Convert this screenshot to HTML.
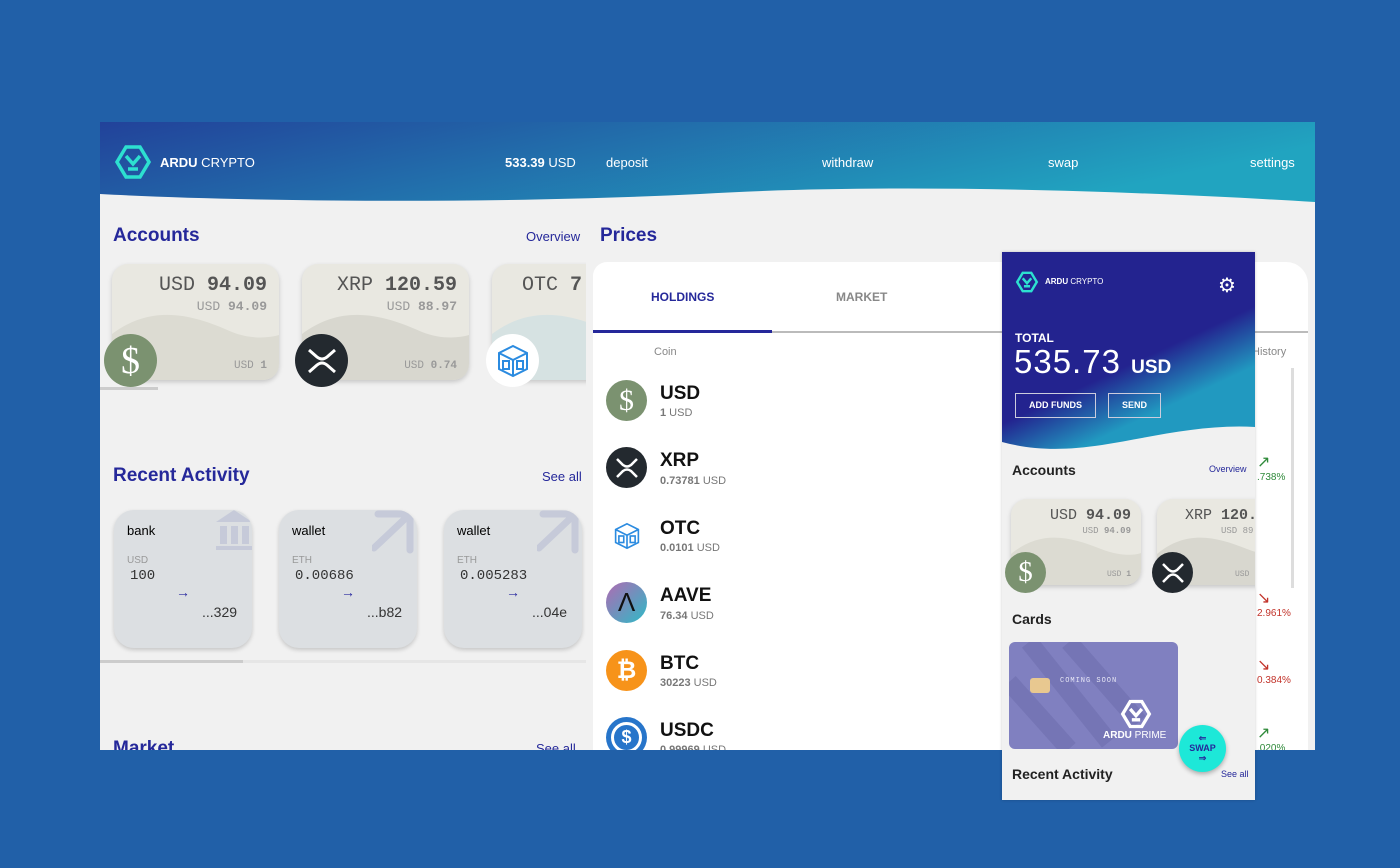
<!DOCTYPE html>
<html><head><meta charset="utf-8"><style>
*{box-sizing:border-box;margin:0;padding:0}
body{width:1400px;height:868px;background:#2160a8;font-family:"Liberation Sans",sans-serif;position:relative;overflow:hidden}
.abs{position:absolute}
.main{left:100px;top:122px;width:1215px;height:628px;background:#f1f1f1;overflow:hidden}
.mono{font-family:"Liberation Mono",monospace}
.card{position:absolute;border-radius:16px;background:#e9e8e1;box-shadow:0 2px 5px rgba(0,0,0,.18);overflow:hidden}
.h2{color:#25289a;font-size:19px;font-weight:bold}
.link{color:#25289a;font-size:13px}
.coin{position:absolute;border-radius:50%;display:flex;align-items:center;justify-content:center;color:#fff}
.act{position:absolute;width:138px;height:138px;border-radius:20px;background:#dcdfe2;box-shadow:0 2px 4px rgba(0,0,0,.18);overflow:hidden}
.row .n{font-size:19px;font-weight:bold;color:#111}
.row .p{font-size:11px;color:#777}
</style></head><body>
<div class="abs main">
 <svg class="abs" style="left:0;top:0" width="1215" height="82"><defs><linearGradient id="g" x1="0" x2="1" y1="0" y2="0.3"><stop offset="0" stop-color="#22429a"/><stop offset="1" stop-color="#21a4c0"/></linearGradient></defs><path d="M0 0H1215V80C1050 70 800 60 600 72 400 82 150 80 0 72Z" fill="url(#g)"/></svg>
 <svg class="abs" style="left:14px;top:22px" width="38" height="36" viewBox="0 0 38 36" fill="none" stroke="#2de0d0" stroke-width="3.5"><path d="M12 3H26L35 18 26 33H12L3 18Z"/><path d="M12 12L19 20 26 12M14 25H24"/></svg>
 <div class="abs" style="left:60px;top:33px;color:#fff;font-size:13px"><b>ARDU</b> CRYPTO</div>
 <div class="abs" style="left:405px;top:33px;color:#fff;font-size:13px"><b>533.39</b> USD</div>
 <div class="abs" style="left:506px;top:33px;color:#fff;font-size:13px">deposit</div>
 <div class="abs" style="left:722px;top:33px;color:#fff;font-size:13px">withdraw</div>
 <div class="abs" style="left:948px;top:33px;color:#fff;font-size:13px">swap</div>
 <div class="abs" style="left:1150px;top:33px;color:#fff;font-size:13px">settings</div>

 <div class="abs h2" style="left:13px;top:103px">Accounts</div>
 <div class="abs link" style="left:426px;top:107px">Overview</div>
 <div class="abs h2" style="left:500px;top:103px">Prices</div>

 <div class="abs" style="left:0;top:140px;width:486px;height:130px;overflow:hidden">
  <div class="card" style="left:12px;top:2px;width:167px;height:116px"><svg class="abs" style="left:0;top:40px" width="170" height="80"><path d="M0 30C40 0 80 10 120 28 140 36 160 34 170 30V80H0Z" fill="#dcdbd2"/></svg>
   <div class="abs mono" style="right:12px;top:10px;font-size:20px;color:#555">USD <b>94.09</b></div>
   <div class="abs mono" style="right:12px;top:35px;font-size:13px;color:#999">USD <b>94.09</b></div>
   <div class="abs mono" style="right:12px;top:96px;font-size:11px;color:#999">USD <b>1</b></div></div>
  <div class="card" style="left:202px;top:2px;width:167px;height:116px"><svg class="abs" style="left:0;top:40px" width="170" height="80"><path d="M0 30C40 0 80 10 120 28 140 36 160 34 170 30V80H0Z" fill="#d8d7cf"/></svg>
   <div class="abs mono" style="right:12px;top:10px;font-size:20px;color:#555">XRP <b>120.59</b></div>
   <div class="abs mono" style="right:12px;top:35px;font-size:13px;color:#999">USD <b>88.97</b></div>
   <div class="abs mono" style="right:12px;top:96px;font-size:11px;color:#999">USD <b>0.74</b></div></div>
  <div class="card" style="left:392px;top:2px;width:167px;height:116px"><svg class="abs" style="left:0;top:40px" width="170" height="80"><path d="M0 30C40 0 80 10 120 28 140 36 160 34 170 30V80H0Z" fill="#d6e2e2"/></svg>
   <div class="abs mono" style="left:30px;top:10px;font-size:20px;color:#555">OTC <b>7</b></div></div>
  <div class="coin" style="left:4px;top:72px;width:53px;height:53px;background:#7b9270;font-size:38px;font-family:'Liberation Serif',serif">$</div>
  <div class="coin" style="left:195px;top:72px;width:53px;height:53px;background:#23292f"><svg width="30" height="26"><path d="M2 2L10 9Q15 13 20 9L28 2M2 24L10 17Q15 13 20 17L28 24" stroke="#fff" stroke-width="3" fill="none"/></svg></div>
  <div class="coin" style="left:386px;top:72px;width:53px;height:53px;background:#fff"><svg width="32" height="34" viewBox="0 0 32 34" fill="none" stroke="#2b8be0" stroke-width="2"><path d="M16 2L30 9V25L16 32 2 25V9Z M2 9L16 16 30 9M16 16V32"/><rect x="6" y="17" width="6" height="8"/><rect x="20" y="17" width="6" height="8"/></svg></div>
 </div>
 <div class="abs" style="left:0;top:265px;width:58px;height:3px;background:#ccc"></div>

 <div class="abs h2" style="left:13px;top:343px">Recent Activity</div>
 <div class="abs link" style="left:442px;top:347px">See all</div>
 <div class="act" style="left:14px;top:388px"><svg class="abs" style="right:0;top:0" width="36" height="40"><path d="M0 12L18 0 36 12Z M4 16h7v18h-7z M15 16h7v18h-7z M26 16h7v18h-7z M0 36h36v5H0z" fill="#c6cad9"/></svg>
  <div class="abs" style="left:13px;top:13px;font-size:13px">bank</div><div class="abs" style="left:13px;top:45px;font-size:10px;color:#999">USD</div><div class="abs mono" style="left:16px;top:58px;font-size:14px;color:#333">100</div><div class="abs" style="left:62px;top:74px;color:#2a2aa0;font-size:14px">→</div><div class="abs" style="left:88px;top:94px;font-size:14px;color:#333">...329</div></div>
 <div class="act" style="left:179px;top:388px"><svg class="abs" style="right:0;top:0" width="45" height="45"><path d="M2 38L38 4M6 4H38V40" stroke="#c6cad9" stroke-width="7" fill="none" stroke-linecap="round"/></svg>
  <div class="abs" style="left:13px;top:13px;font-size:13px">wallet</div><div class="abs" style="left:13px;top:45px;font-size:10px;color:#999">ETH</div><div class="abs mono" style="left:16px;top:58px;font-size:14px;color:#333">0.00686</div><div class="abs" style="left:62px;top:74px;color:#2a2aa0;font-size:14px">→</div><div class="abs" style="left:88px;top:94px;font-size:14px;color:#333">...b82</div></div>
 <div class="act" style="left:344px;top:388px"><svg class="abs" style="right:0;top:0" width="45" height="45"><path d="M2 38L38 4M6 4H38V40" stroke="#c6cad9" stroke-width="7" fill="none" stroke-linecap="round"/></svg>
  <div class="abs" style="left:13px;top:13px;font-size:13px">wallet</div><div class="abs" style="left:13px;top:45px;font-size:10px;color:#999">ETH</div><div class="abs mono" style="left:16px;top:58px;font-size:14px;color:#333">0.005283</div><div class="abs" style="left:62px;top:74px;color:#2a2aa0;font-size:14px">→</div><div class="abs" style="left:88px;top:94px;font-size:14px;color:#333">...04e</div></div>
 <div class="abs" style="left:0;top:538px;width:486px;height:3px;background:#e6e6e6"></div>
 <div class="abs" style="left:0;top:538px;width:143px;height:3px;background:#ccc"></div>
 <div class="abs h2" style="left:13px;top:616px">Market</div>
 <div class="abs link" style="left:436px;top:619px">See all</div>

 <div class="abs" style="left:493px;top:140px;width:715px;height:500px;background:#fff;border-radius:14px 22px 0 0">
  <div class="abs" style="left:58px;top:28px;font-size:12px;font-weight:bold;color:#25289a">HOLDINGS</div>
  <div class="abs" style="left:243px;top:28px;font-size:12px;font-weight:bold;color:#888">MARKET</div>
  <div class="abs" style="left:0;top:69px;width:715px;height:2px;background:#bbb"></div>
  <div class="abs" style="left:0;top:68px;width:179px;height:3px;background:#25289a"></div>
  <div class="abs" style="left:61px;top:84px;font-size:11px;color:#888">Coin</div>
  <div class="abs" style="left:659px;top:84px;font-size:11px;color:#888">History</div>
  <div class="abs" style="left:698px;top:106px;width:3px;height:220px;background:#ddd"></div>
  <div class="abs" style="left:664px;top:190px;font-size:10px;color:#2f8a3a"><span style="font-size:16px">↗</span><br>.738%</div>
  <div class="abs" style="left:664px;top:326px;font-size:10px;color:#c2332a"><span style="font-size:16px">↘</span><br>2.961%</div>
  <div class="abs" style="left:664px;top:393px;font-size:10px;color:#c2332a"><span style="font-size:16px">↘</span><br>0.384%</div>
  <div class="abs" style="left:664px;top:461px;font-size:10px;color:#2f8a3a"><span style="font-size:16px">↗</span><br>.020%</div>
 </div>
 <div class="abs row" style="left:506px;top:258px">
  <div class="coin" style="left:0;top:0;width:41px;height:41px;background:#7b9270;font-size:30px;font-family:'Liberation Serif',serif">$</div><div class="abs n" style="left:54px;top:3px">USD</div><div class="abs p" style="left:54px;top:27px;white-space:nowrap"><b>1</b> USD</div>
  <div class="coin" style="left:0;top:67px;width:41px;height:41px;background:#23292f"><svg width="24" height="20"><path d="M2 1L8 7Q12 10 16 7L22 1M2 19L8 13Q12 10 16 13L22 19" stroke="#fff" stroke-width="2.5" fill="none"/></svg></div><div class="abs n" style="left:54px;top:70px">XRP</div><div class="abs p" style="left:54px;top:95px;white-space:nowrap"><b>0.73781</b> USD</div>
  <div class="coin" style="left:0;top:135px;width:41px;height:41px;background:#fff"><svg width="26" height="28" viewBox="0 0 32 34" fill="none" stroke="#2b8be0" stroke-width="2"><path d="M16 2L30 9V25L16 32 2 25V9Z M2 9L16 16 30 9M16 16V32"/><rect x="6" y="17" width="6" height="8"/><rect x="20" y="17" width="6" height="8"/></svg></div><div class="abs n" style="left:54px;top:138px">OTC</div><div class="abs p" style="left:54px;top:162px;white-space:nowrap"><b>0.0101</b> USD</div>
  <div class="coin" style="left:0;top:202px;width:41px;height:41px;background:linear-gradient(135deg,#b06ab3,#2ebac6);color:#111;font-size:26px">Λ</div><div class="abs n" style="left:54px;top:205px">AAVE</div><div class="abs p" style="left:54px;top:230px;white-space:nowrap"><b>76.34</b> USD</div>
  <div class="coin" style="left:0;top:270px;width:41px;height:41px;background:#f7931a;font-size:24px;font-weight:bold">₿</div><div class="abs n" style="left:54px;top:273px">BTC</div><div class="abs p" style="left:54px;top:297px;white-space:nowrap"><b>30223</b> USD</div>
  <div class="coin" style="left:0;top:337px;width:41px;height:41px;background:#2775ca"><div style="width:31px;height:31px;border:3px solid #fff;border-radius:50%;text-align:center;font-weight:bold;font-size:18px;line-height:25px">$</div></div><div class="abs n" style="left:54px;top:340px">USDC</div><div class="abs p" style="left:54px;top:364px;white-space:nowrap"><b>0.99969</b> USD</div>
 </div>
</div>

<div class="abs" style="left:1002px;top:252px;width:253px;height:548px;background:#f1f1f1;overflow:hidden;box-shadow:0 0 3px rgba(0,0,0,.2)">
 <svg class="abs" style="left:0;top:0" width="253" height="205"><defs><linearGradient id="g2" x1="0" x2="0.3" y1="0.5" y2="1"><stop offset="0.55" stop-color="#23238f"/><stop offset="1" stop-color="#2199c0"/></linearGradient></defs><path d="M0 0H253V175C200 172 150 185 100 193 60 199 30 198 0 190Z" fill="url(#g2)"/></svg>
 <svg class="abs" style="left:13px;top:19px" width="24" height="22" viewBox="0 0 38 36" fill="none" stroke="#2de0d0" stroke-width="4"><path d="M12 3H26L35 18 26 33H12L3 18Z"/><path d="M12 12L19 20 26 12M14 25H24"/></svg>
 <div class="abs" style="left:43px;top:25px;color:#fff;font-size:8px"><b>ARDU</b> CRYPTO</div>
 <div class="abs" style="left:216px;top:21px;color:#fff;font-size:20px">⚙</div>
 <div class="abs" style="left:13px;top:79px;color:#fff;font-size:12px;font-weight:bold">TOTAL</div>
 <div class="abs" style="left:12px;top:91px;color:#fff;font-size:33px;white-space:nowrap;letter-spacing:1px">535.73 <b style="font-size:19px;letter-spacing:0">USD</b></div>
 <div class="abs" style="left:13px;top:141px;width:81px;height:25px;border:1px solid #ccd;color:#fff;font-size:9px;font-weight:bold;text-align:center;line-height:23px">ADD FUNDS</div>
 <div class="abs" style="left:106px;top:141px;width:53px;height:25px;border:1px solid #ccd;color:#fff;font-size:9px;font-weight:bold;text-align:center;line-height:23px">SEND</div>
 <div class="abs" style="left:10px;top:210px;font-size:14px;font-weight:bold;color:#222">Accounts</div>
 <div class="abs" style="left:207px;top:212px;font-size:9px;color:#25289a">Overview</div>
 <div class="card" style="left:9px;top:247px;width:130px;height:86px"><svg class="abs" style="left:0;top:30px" width="130" height="60"><path d="M0 25C30 0 60 8 90 20 110 28 125 26 130 24V60H0Z" fill="#dcdbd2"/></svg>
  <div class="abs mono" style="right:10px;top:8px;font-size:15px;color:#555">USD <b>94.09</b></div><div class="abs mono" style="right:10px;top:27px;font-size:9px;color:#999">USD <b>94.09</b></div><div class="abs mono" style="right:10px;top:71px;font-size:8px;color:#999">USD <b>1</b></div></div>
 <div class="card" style="left:155px;top:247px;width:130px;height:86px"><svg class="abs" style="left:0;top:30px" width="130" height="60"><path d="M0 25C30 0 60 8 90 20 110 28 125 26 130 24V60H0Z" fill="#d8d7cf"/></svg>
  <div class="abs mono" style="left:28px;top:8px;font-size:15px;color:#555">XRP <b>120.</b></div><div class="abs mono" style="left:64px;top:27px;font-size:9px;color:#999">USD 89</div><div class="abs mono" style="left:78px;top:71px;font-size:8px;color:#999">USD</div></div>
 <div class="coin" style="left:3px;top:300px;width:41px;height:41px;background:#7b9270;font-size:29px;font-family:'Liberation Serif',serif">$</div>
 <div class="coin" style="left:150px;top:300px;width:41px;height:41px;background:#23292f"><svg width="24" height="20"><path d="M2 1L8 7Q12 10 16 7L22 1M2 19L8 13Q12 10 16 13L22 19" stroke="#fff" stroke-width="2.5" fill="none"/></svg></div>
 <div class="abs" style="left:10px;top:359px;font-size:14px;font-weight:bold;color:#222">Cards</div>
 <div class="abs" style="left:7px;top:390px;width:169px;height:107px;background:#8080c0;border-radius:6px;overflow:hidden">
  <svg class="abs" style="left:0;top:0" width="169" height="107"><path d="M20 0L100 100M0 40L60 107M60 0L130 80" stroke="#7575b5" stroke-width="18" fill="none"/></svg>
  <div class="abs" style="left:21px;top:36px;width:20px;height:15px;background:#e8c890;border-radius:3px"></div>
  <div class="abs mono" style="left:51px;top:35px;font-size:7px;color:#e8e8f6;letter-spacing:1px">COMING SOON</div>
  <svg class="abs" style="left:111px;top:57px" width="32" height="30" viewBox="0 0 38 36" fill="none" stroke="#fff" stroke-width="4"><path d="M12 3H26L35 18 26 33H12L3 18Z"/><path d="M12 12L19 20 26 12M14 25H24"/></svg>
  <div class="abs" style="left:94px;top:88px;font-size:10px;color:#fff"><b>ARDU</b> PRIME</div>
 </div>
 <div class="abs" style="left:10px;top:514px;font-size:14px;font-weight:bold;color:#222">Recent Activity</div>
 <div class="abs" style="left:219px;top:517px;font-size:9px;color:#25289a">See all</div>
</div>
<div class="abs" style="left:1179px;top:725px;width:47px;height:47px;border-radius:50%;background:#1de8d8;box-shadow:0 2px 5px rgba(0,0,0,.3);color:#25289a;text-align:center;font-size:9px;font-weight:bold;line-height:10px;padding-top:8px">⇐<br>SWAP<br>⇒</div>
</body></html>
